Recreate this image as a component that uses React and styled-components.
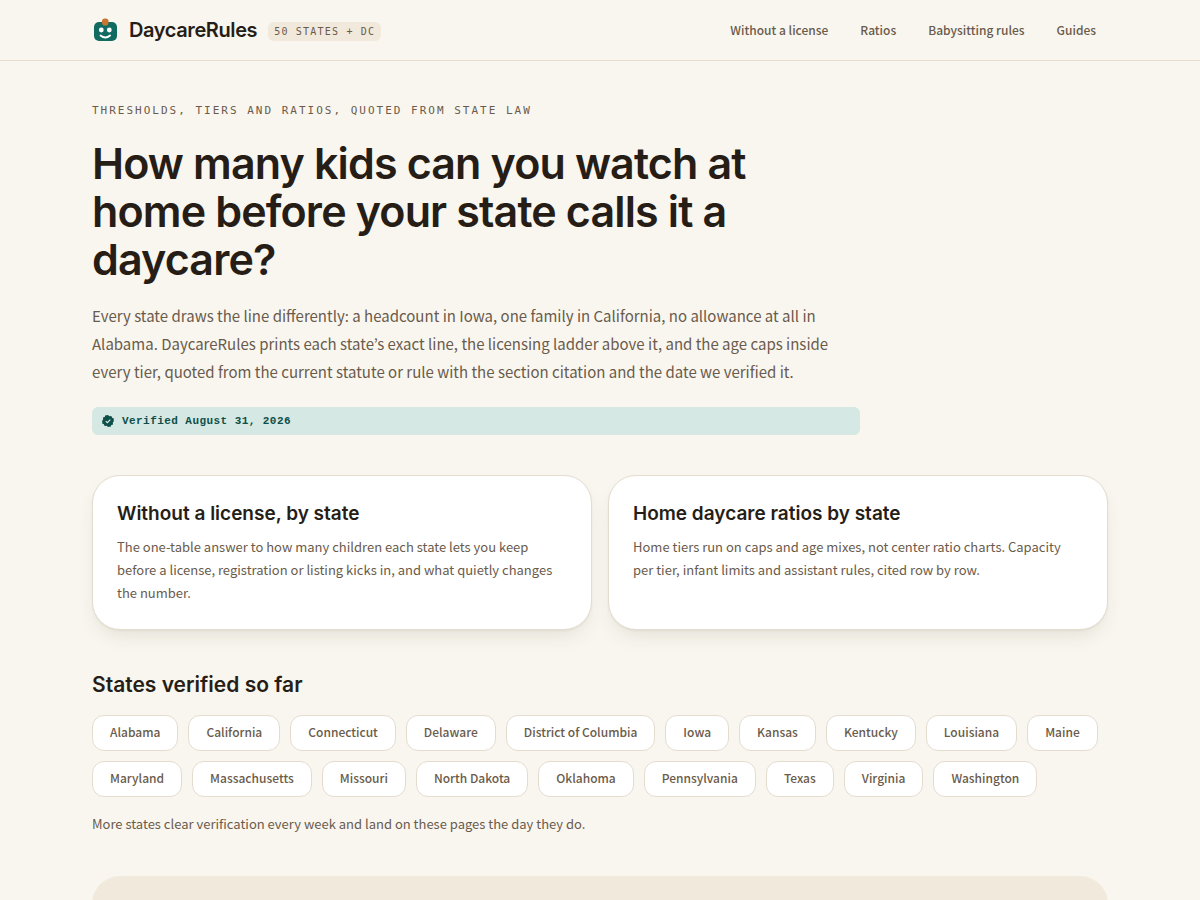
import React from "react";
import styled, { createGlobalStyle } from "styled-components";

const display = `"Inter", "Liberation Sans", sans-serif`;
const body = `"Noto Sans CJK JP", "Open Sans", sans-serif`;
const mono = `"Liberation Mono", monospace`;
const labelMono = `"DejaVu Sans Mono", monospace`;

const ink = "#261e16";
const muted = "#6a5b4b";
const line = "#e4dccf";
const sand = "#f1e9dc";

const GlobalStyle = createGlobalStyle`
  *, *::before, *::after { box-sizing: border-box; }
  body {
    margin: 0;
    background: #f9f6f0;
    color: ${ink};
    font-family: ${body};
    -webkit-font-smoothing: antialiased;
  }
  h1, h2, h3, p, ul { margin: 0; padding: 0; }
  a { color: inherit; text-decoration: none; }
`;

const Page = styled.div`
  height: 100vh;
  overflow: hidden;
`;

const Header = styled.header`
  border-bottom: 1px solid ${line};
`;

const HeaderInner = styled.div`
  max-width: 1064px;
  height: 60px;
  margin: 0 auto;
  padding: 0 24px;
  display: flex;
  align-items: center;
  justify-content: space-between;
`;

const Brand = styled.a`
  display: flex;
  align-items: center;
  gap: 11px;
`;

const BrandName = styled.span`
  font: 600 20px/24px ${display};
  letter-spacing: -0.02em;
`;

const Badge = styled.span`
  margin-top: 3px;
  padding: 4px 6px 3px;
  border-radius: 6px;
  background: ${sand};
  color: ${muted};
  font: 400 10px/12px ${labelMono};
  letter-spacing: 0.12em;
`;

const Nav = styled.nav`
  display: flex;
  gap: 32px;
  padding-right: 12px;
  color: ${muted};
  font-size: 12px;
  line-height: 20px;
  font-weight: 500;
`;

const Main = styled.main`
  max-width: 1064px;
  margin: 0 auto;
  padding: 40px 24px 0;
`;

const Hero = styled.section`
  max-width: 768px;
  display: flex;
  flex-direction: column;
`;

const Eyebrow = styled.p`
  color: ${muted};
  font: 400 11px/20px ${labelMono};
  letter-spacing: 2px;
`;

const Title = styled.h1`
  max-width: 700px;
  margin-top: 18px;
  font: 600 43px/48px ${display};
  letter-spacing: -0.02em;
`;

const Lead = styled.p`
  margin-top: 19px;
  color: ${muted};
  font-size: 15px;
  line-height: 28px;
`;

const Verified = styled.p`
  display: flex;
  align-items: center;
  gap: 8px;
  margin-top: 21px;
  padding: 4px 10px;
  border-radius: 6px;
  background: #d6e8e3;
  color: #0d4f49;
  font: 700 11px/20px ${mono};
  letter-spacing: 0.04em;
`;

const Cards = styled.div`
  display: grid;
  grid-template-columns: repeat(2, 1fr);
  gap: 16px;
  margin-top: 40px;
`;

const Card = styled.a`
  padding: 24px 24px 25px;
  border: 1px solid ${line};
  border-radius: 28px;
  background: #fff;
  box-shadow: 0 1px 2px rgba(60, 50, 20, 0.06), 0 10px 20px -6px rgba(60, 55, 20, 0.12);
`;

const CardTitle = styled.h2`
  font: 600 19px/27px ${display};
`;

const CardText = styled.p`
  margin-top: 8px;
  color: ${muted};
  font-size: 13px;
  line-height: 23px;
`;

const SectionTitle = styled.h2`
  margin-top: 41px;
  font: 600 21px/28px ${display};
`;

const Chips = styled.ul`
  display: flex;
  flex-wrap: wrap;
  gap: 10px;
  margin-top: 16px;
  list-style: none;
`;

const Chip = styled.a`
  display: block;
  padding: 6px 17px 8px;
  border: 1px solid ${line};
  border-radius: 12px;
  background: #fff;
  color: ${muted};
  font-size: 12px;
  line-height: 20px;
  font-weight: 500;
`;

const Note = styled.p`
  margin-top: 15px;
  color: ${muted};
  font-size: 13px;
  line-height: 23px;
`;

const Panel = styled.section`
  height: 200px;
  margin-top: 41px;
  border-radius: 28px;
  background: ${sand};
`;

const Logo = () => (
  <svg width="26" height="26" viewBox="0 0 26 26" aria-hidden="true">
    <rect x="2" y="5" width="23" height="19" rx="5" fill="#126b60" />
    <rect x="10" y="1.500" width="6.500" height="7" rx="2.800" fill="#c87533" />
    <circle cx="9.300" cy="13" r="2.400" fill="#fff" />
    <circle cx="17.300" cy="13" r="2.400" fill="#fff" />
    <path d="M8.500 18.500q4.800 4 9.600 0" fill="none" stroke="#fff" strokeWidth="1.800" strokeLinecap="round" />
  </svg>
);

const Seal = () => (
  <svg width="12" height="12" viewBox="0 0 24 24" aria-hidden="true">
    <path
      fill="currentColor"
      d="M12 0l3 2.300 3.800-.400 1.400 3.500 3.500 1.400-.400 3.700L24 12l-2.300 3 .400 3.800-3.500 1.400-1.400 3.500-3.700-.400L12 24l-3-2.300-3.800.400-1.400-3.500-3.500-1.400.400-3.700L0 12l2.300-3-.400-3.800 3.500-1.400L6.800.300l3.700.400z"
    />
    <path d="M7.500 12.300l3.200 3.200 6-6.300" fill="none" stroke="#d6e8e3" strokeWidth="2.400" />
  </svg>
);

const links = ["Without a license", "Ratios", "Babysitting rules", "Guides"];

const states = [
  "Alabama", "California", "Connecticut", "Delaware", "District of Columbia",
  "Iowa", "Kansas", "Kentucky", "Louisiana", "Maine", "Maryland",
  "Massachusetts", "Missouri", "North Dakota", "Oklahoma", "Pennsylvania",
  "Texas", "Virginia", "Washington",
];

export default function App() {
  return (
    <Page>
      <GlobalStyle />
      <Header>
        <HeaderInner>
          <Brand href="#">
            <Logo />
            <BrandName>DaycareRules</BrandName>
            <Badge>50 STATES + DC</Badge>
          </Brand>
          <Nav>
            {links.map((l) => (
              <a key={l} href="#">{l}</a>
            ))}
          </Nav>
        </HeaderInner>
      </Header>
      <Main>
        <Hero>
          <Eyebrow>THRESHOLDS, TIERS AND RATIOS, QUOTED FROM STATE LAW</Eyebrow>
          <Title>How many kids can you watch at home before your state calls it a daycare?</Title>
          <Lead>
            Every state draws the line differently: a headcount in Iowa, one family in California, no
            allowance at all in Alabama. DaycareRules prints each state’s exact line, the licensing
            ladder above it, and the age caps inside every tier, quoted from the current statute or
            rule with the section citation and the date we verified it.
          </Lead>
          <Verified>
            <Seal />
            Verified August 31, 2026
          </Verified>
        </Hero>
        <Cards>
          <Card href="#">
            <CardTitle>Without a license, by state</CardTitle>
            <CardText>
              The one-table answer to how many children each state lets you keep before a license,
              registration or listing kicks in, and what quietly changes the number.
            </CardText>
          </Card>
          <Card href="#">
            <CardTitle>Home daycare ratios by state</CardTitle>
            <CardText>
              Home tiers run on caps and age mixes, not center ratio charts. Capacity per tier,
              infant limits and assistant rules, cited row by row.
            </CardText>
          </Card>
        </Cards>
        <SectionTitle>States verified so far</SectionTitle>
        <Chips>
          {states.map((s) => (
            <li key={s}>
              <Chip href="#">{s}</Chip>
            </li>
          ))}
        </Chips>
        <Note>More states clear verification every week and land on these pages the day they do.</Note>
        <Panel />
      </Main>
    </Page>
  );
}
